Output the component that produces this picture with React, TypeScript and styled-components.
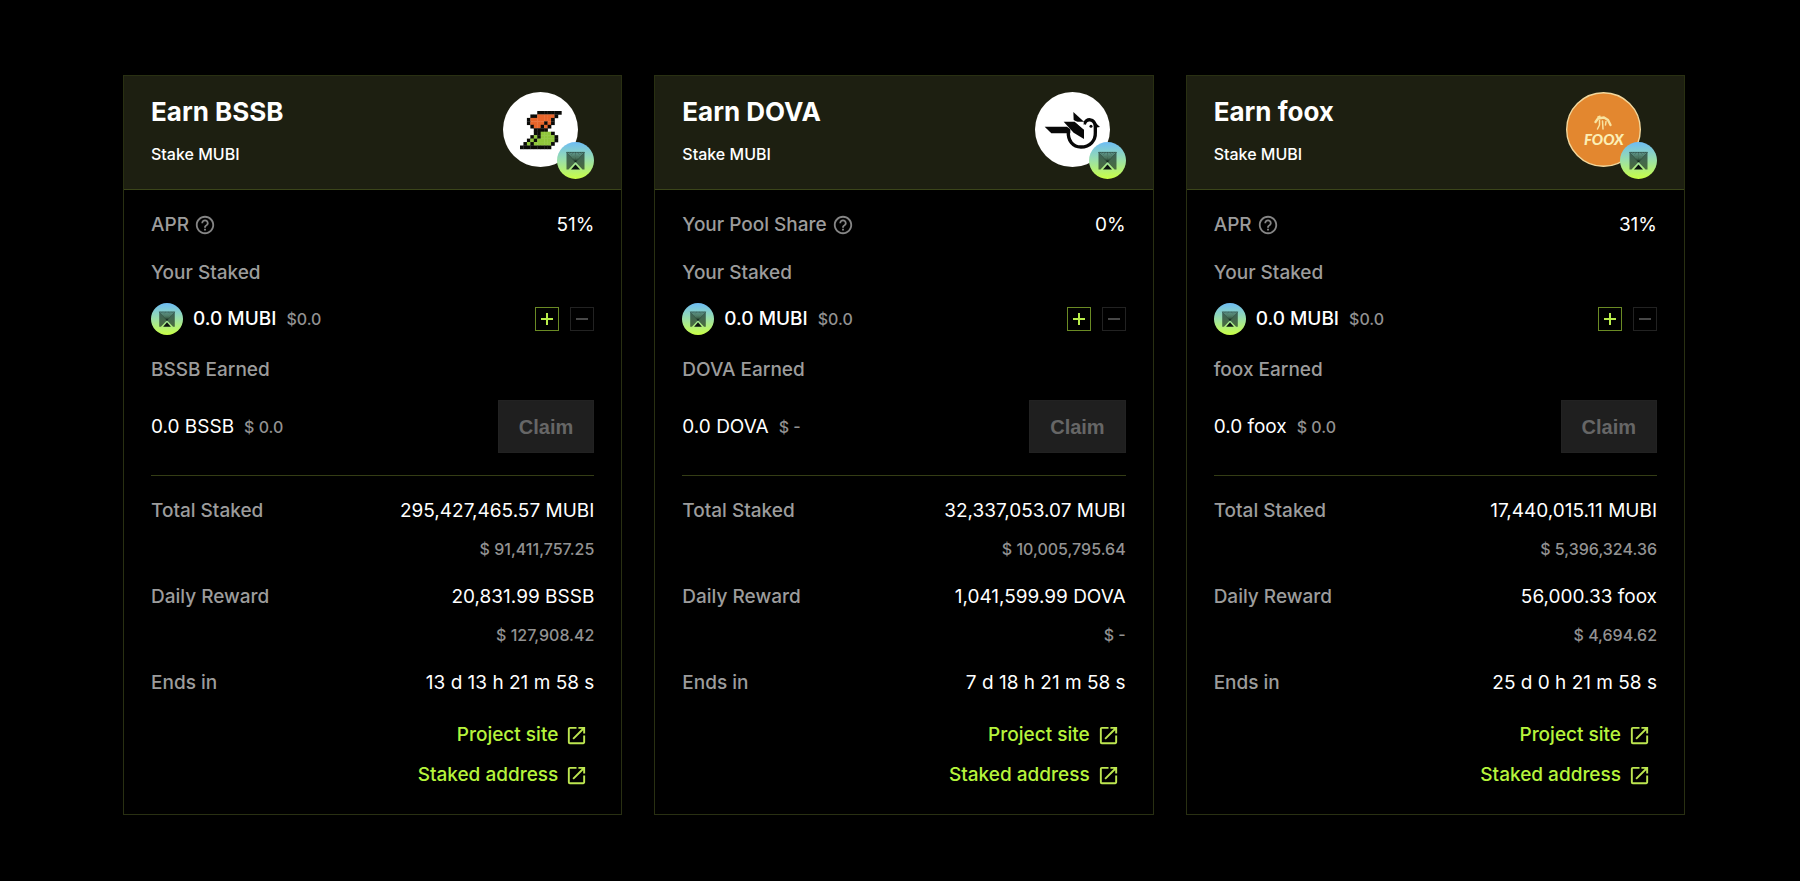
import React from 'react';
import styled, { createGlobalStyle } from 'styled-components';
import { MdHelpOutline, MdOpenInNew } from 'react-icons/md';

const Global = createGlobalStyle`
  *, *::before, *::after { box-sizing: border-box; }
  body {
    margin: 0;
    background: #000;
    color: #fff;
    font-family: Inter, "Liberation Sans", sans-serif;
    font-size: 19px;
    line-height: 24px;
  }
`;

const Page = styled.main`
  padding: 75px 115px 66px 123px;
`;

const Grid = styled.div`
  display: grid;
  grid-template-columns: repeat(3, minmax(0, 1fr));
  gap: 32px;

  @media (max-width: 1280px) {
    grid-template-columns: minmax(0, 1fr);
  }
`;

const Card = styled.article`
  border: 1px solid #293012;
`;

const Header = styled.header`
  display: flex;
  justify-content: space-between;
  padding: 16px 27px 10px;
  background: #1d1f11;
  border-bottom: 1px solid #3b451a;
`;

const Title = styled.h2`
  margin: 5px 0 15px;
  font-size: 26px;
  line-height: 30px;
  font-weight: 700;
`;

const Subtitle = styled.p`
  margin: 0;
  font-size: 16px;
  font-weight: 500;
`;

const LogoPair = styled.div`
  position: relative;
  width: 91px;
  height: 87px;
`;

const PoolLogo = styled.svg`
  display: block;
  width: 75px;
  height: 75px;
`;

const Badge = styled.div`
  position: absolute;
  right: 0;
  bottom: 0;
`;

const Token = styled.svg<{ $size: number }>`
  display: block;
  flex: none;
  width: ${(p) => p.$size}px;
  height: ${(p) => p.$size}px;
`;

const Body = styled.div`
  padding: 23px 27px 27px;
`;

const Row = styled.div<{ $gap?: number }>`
  display: flex;
  align-items: center;
  justify-content: space-between;
  margin-bottom: ${(p) => p.$gap ?? 0}px;
`;

const Label = styled.span`
  display: inline-flex;
  align-items: center;
  gap: 5px;
  font-weight: 500;
  color: #9c9c9c;
`;

const HelpIcon = styled(MdHelpOutline)`
  width: 22px;
  height: 22px;
  color: #858585;
`;

const Holding = styled.div`
  display: flex;
  align-items: center;
  gap: 10px;
`;

const Amounts = styled.div`
  display: flex;
  align-items: baseline;
  gap: 10px;
`;

const Amount = styled.span<{ $strong?: boolean }>`
  font-weight: ${(p) => (p.$strong ? 500 : 400)};
`;

const Fiat = styled.span`
  font-size: 16px;
  font-weight: 500;
  color: #929292;
`;

const Steppers = styled.div`
  display: flex;
  gap: 11px;
`;

const Stepper = styled.button`
  display: grid;
  place-items: center;
  width: 24px;
  height: 24px;
  padding: 0;
  color: #b9ec4b;
  background: transparent;
  border: 1px solid #6a8a24;

  &:disabled {
    color: #484848;
    border-color: #222;
  }
`;

const ClaimButton = styled.button`
  padding: 0 20px;
  height: 53px;
  color: #666;
  background: #1f1f1f;
  border: 1px solid #222;
  font: 700 20px/24px "Liberation Sans", Arial, sans-serif;
`;

const Divider = styled.hr`
  height: 1px;
  margin: 22px 0 23px;
  border: 0;
  background: #343d15;
`;

const Stat = styled.div`
  display: flex;
  justify-content: space-between;
  margin-bottom: 24px;
`;

const StatValues = styled.div`
  display: grid;
  gap: 14px;
  justify-items: end;
`;

const Links = styled.nav`
  display: grid;
  gap: 16px;
  justify-items: end;
  padding: 4px 6px 0 0;
`;

const ExternalLink = styled.a`
  display: inline-flex;
  align-items: center;
  gap: 7px;
  font-weight: 500;
  color: #b6f43c;
  text-decoration: none;

  svg {
    width: 23px;
    height: 23px;
    color: #bde650;
  }
`;

const BSSB_PIXELS = [
  '.....KKKKKKK',
  '...KKOOOOOK.',
  '..KOOOOOOK..',
  '..KOOOOKOK..',
  '...KOOKOK...',
  '....KKKK....',
  '....KKGGGK..',
  '...KGKGGGGK.',
  '..KGKGGGGGK.',
  '.KGKGGGGGK..',
  'KKKKKKKKK...',
];
const PIXEL_FILL: Record<string, string> = { K: '#0b0b08', O: '#e8652a', G: '#8fc63a' };

function BssbLogo() {
  return (
    <PoolLogo viewBox="0 0 75 75" role="img" aria-label="BSSB">
      <circle cx="37.5" cy="37.5" r="37.5" fill="#fff" />
      <g transform="translate(17 19) scale(3.45)">
        {BSSB_PIXELS.flatMap((row, y) =>
          [...row].map((c, x) =>
            c === '.' ? null : <rect key={`${x}-${y}`} x={x} y={y} width="1.08" height="1.08" fill={PIXEL_FILL[c]} />,
          ),
        )}
      </g>
    </PoolLogo>
  );
}

function DovaLogo() {
  return (
    <PoolLogo viewBox="0 0 75 75" role="img" aria-label="DOVA">
      <circle cx="37.5" cy="37.5" r="37.5" fill="#fff" />
      <g transform="translate(6 15) scale(.3333)">
        <path d="M82 72C80 102 96 120 120 120C147 120 164 101 163 76V58C161 34 135 32 130 52" fill="none" stroke="#080808" strokeWidth="10" />
        <path d="M155 39L177 60L162 62Z" fill="#080808" />
        <path d="M11 59H78L88 67V79H31Z" fill="#080808" />
        <path d="M68 44H101L129 68V96L98 77Z" fill="#080808" />
        <path d="M97 15L129 44L128 55L98 39Z" fill="#080808" />
        <path d="M103 44H128V66Z" fill="#fff" />
        <circle cx="150" cy="58" r="4.5" fill="#080808" />
      </g>
    </PoolLogo>
  );
}

const FooxText = styled.text`
  font: italic 900 15px Lato, sans-serif;
`;

function FooxLogo() {
  return (
    <PoolLogo viewBox="0 0 75 75" role="img" aria-label="foox">
      <circle cx="37.5" cy="37.5" r="36.8" fill="#e3872f" stroke="#f3d79c" strokeWidth="1.4" />
      <g fill="none" stroke="#f8e3a0" strokeLinecap="round" strokeLinejoin="round">
        <path d="M29.5 30L32 26.5L38 25.5L42 28L44.5 33" strokeWidth="2.4" />
        <path d="M33.5 28.5V33L31.5 37M36.5 29L37 37M40 29.5L39.5 33" strokeWidth="1.5" />
        <path d="M32 25L34 24.3" strokeWidth="1.5" />
      </g>
      <FooxText x="37.8" y="53" textAnchor="middle" fill="#fbeeb5">
        FOOX
      </FooxText>
    </PoolLogo>
  );
}

const FAN = [-9, -7.2, -5.4, -3.6, -1.8, 0, 1.8, 3.6, 5.4, 7.2, 9];

function MubiToken({ size }: { size: number }) {
  const id = React.useId();
  return (
    <Token $size={size} viewBox="0 0 37 37" aria-hidden="true">
      <defs>
        <linearGradient id={`${id}-bg`} x1="0" y1="0" x2="0" y2="1">
          <stop offset="0" stopColor="#6dbcf5" />
          <stop offset=".5" stopColor="#9be0a8" />
          <stop offset="1" stopColor="#c9ff45" />
        </linearGradient>
      </defs>
      <circle cx="18.5" cy="18.5" r="18.5" fill={`url(#${id}-bg)`} />
      <path d="M9.5 10H27.5L18.5 21Z" fill="#244436" fillOpacity=".3" />
      <path d="M9.5 10L18.5 20L11.5 27.5H9.5ZM27.5 10L18.5 20L25.5 27.5H27.5Z" fill="#16271f" fillOpacity=".66" />
      <g stroke="#10201a" strokeOpacity=".6" strokeWidth=".6">
        {FAN.map((dx) => (
          <path key={dx} d={`M${18.5 + dx} 10L18.5 20`} />
        ))}
      </g>
      <path d="M9.5 10.3H27.5" stroke="#10201a" strokeOpacity=".55" strokeWidth=".8" />
      <path d="M18.5 22.4L14 27.5H23Z" fill="#0d1510" />
    </Token>
  );
}

interface Pool {
  token: string;
  metric: string;
  metricValue: string;
  earnedFiat: string;
  staked: string;
  stakedFiat: string;
  daily: string;
  dailyFiat: string;
  ends: string;
  Logo: () => React.JSX.Element;
}

const POOLS: Pool[] = [
  {
    token: 'BSSB', metric: 'APR', metricValue: '51%', earnedFiat: '$ 0.0',
    staked: '295,427,465.57 MUBI', stakedFiat: '$ 91,411,757.25',
    daily: '20,831.99 BSSB', dailyFiat: '$ 127,908.42',
    ends: '13 d 13 h 21 m 58 s', Logo: BssbLogo,
  },
  {
    token: 'DOVA', metric: 'Your Pool Share', metricValue: '0%', earnedFiat: '$ -',
    staked: '32,337,053.07 MUBI', stakedFiat: '$ 10,005,795.64',
    daily: '1,041,599.99 DOVA', dailyFiat: '$ -',
    ends: '7 d 18 h 21 m 58 s', Logo: DovaLogo,
  },
  {
    token: 'foox', metric: 'APR', metricValue: '31%', earnedFiat: '$ 0.0',
    staked: '17,440,015.11 MUBI', stakedFiat: '$ 5,396,324.36',
    daily: '56,000.33 foox', dailyFiat: '$ 4,694.62',
    ends: '25 d 0 h 21 m 58 s', Logo: FooxLogo,
  },
];

function StatRow({ label, value, fiat }: { label: string; value: string; fiat?: string }) {
  return (
    <Stat>
      <div><Label>{label}</Label></div>
      <StatValues>
        <Amount>{value}</Amount>
        {fiat && <Fiat>{fiat}</Fiat>}
      </StatValues>
    </Stat>
  );
}

function PoolCard({ pool }: { pool: Pool }) {
  const { Logo } = pool;
  return (
    <Card>
      <Header>
        <div>
          <Title>Earn {pool.token}</Title>
          <Subtitle>Stake MUBI</Subtitle>
        </div>
        <LogoPair>
          <Logo />
          <Badge><MubiToken size={37} /></Badge>
        </LogoPair>
      </Header>
      <Body>
        <Row $gap={24}>
          <Label>{pool.metric}<HelpIcon aria-hidden="true" /></Label>
          <Amount>{pool.metricValue}</Amount>
        </Row>
        <Row $gap={18}><Label>Your Staked</Label></Row>
        <Row $gap={23}>
          <Holding>
            <MubiToken size={32} />
            <Amounts>
              <Amount $strong>0.0 MUBI</Amount>
              <Fiat>$0.0</Fiat>
            </Amounts>
          </Holding>
          <Steppers>
            <Stepper type="button" aria-label="Stake more">
              <svg width="14" height="14" viewBox="0 0 14 14" stroke="currentColor" strokeWidth="2">
                <path d="M1 7H13M7 1V13" />
              </svg>
            </Stepper>
            <Stepper type="button" aria-label="Unstake" disabled>
              <svg width="14" height="14" viewBox="0 0 14 14" stroke="currentColor" strokeWidth="2">
                <path d="M1 7H13" />
              </svg>
            </Stepper>
          </Steppers>
        </Row>
        <Row $gap={18}><Label>{pool.token} Earned</Label></Row>
        <Row>
          <Amounts>
            <Amount>0.0 {pool.token}</Amount>
            <Fiat>{pool.earnedFiat}</Fiat>
          </Amounts>
          <ClaimButton type="button" disabled>Claim</ClaimButton>
        </Row>
        <Divider />
        <StatRow label="Total Staked" value={pool.staked} fiat={pool.stakedFiat} />
        <StatRow label="Daily Reward" value={pool.daily} fiat={pool.dailyFiat} />
        <StatRow label="Ends in" value={pool.ends} />
        <Links aria-label={`${pool.token} links`}>
          <ExternalLink href="#project">Project site<MdOpenInNew aria-hidden="true" /></ExternalLink>
          <ExternalLink href="#address">Staked address<MdOpenInNew aria-hidden="true" /></ExternalLink>
        </Links>
      </Body>
    </Card>
  );
}

export default function App() {
  return (
    <>
      <Global />
      <Page>
        <Grid>
          {POOLS.map((pool) => (
            <PoolCard key={pool.token} pool={pool} />
          ))}
        </Grid>
      </Page>
    </>
  );
}
